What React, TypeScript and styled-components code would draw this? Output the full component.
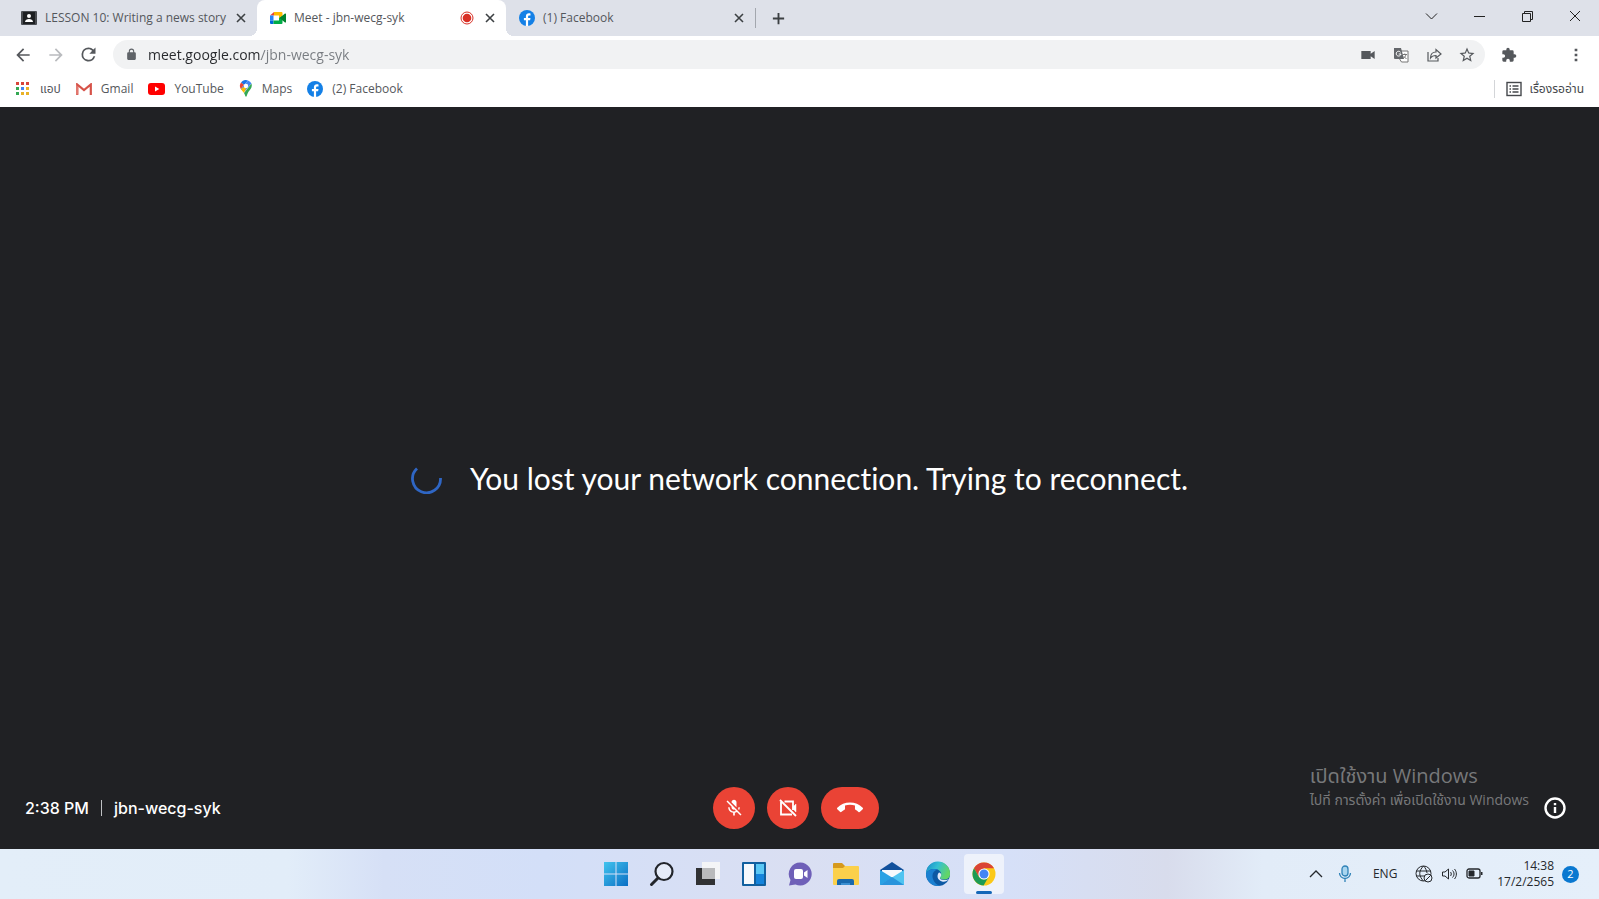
import React from "react";
import styled, { createGlobalStyle } from "styled-components";

const GlobalStyle = createGlobalStyle`
  * { box-sizing: border-box; }
  body { margin: 0; background: #202124; font-family: "Open Sans", "Noto Sans Thai", "Noto Sans", sans-serif; }
  button { font: inherit; color: inherit; border: 0; padding: 0; background: none; cursor: pointer; }
  svg { display: block; flex: none; }
`;

const Desktop = styled.div`
  min-height: 100vh;
  display: flex;
  flex-direction: column;
`;

/* Browser window */

const TabStrip = styled.header`
  display: flex;
  height: 36px;
  background: #dee1e9;
  color: #3c4043;
`;

const Tabs = styled.nav`
  display: flex;
  align-items: center;
  padding-left: 8px;
`;

const Tab = styled.div<{ $active?: boolean }>`
  position: relative;
  display: flex;
  align-items: center;
  gap: 8px;
  width: 249px;
  height: 36px;
  padding: 0 8px 1px 13px;
  background: ${(p) => (p.$active ? "#fff" : "transparent")};
  border-radius: 8px 8px 0 0;

  &::before, &::after {
    content: "";
    display: ${(p) => (p.$active ? "block" : "none")};
    position: absolute;
    bottom: 0;
    width: 8px;
    height: 8px;
  }
  &::before { left: -8px; background: radial-gradient(circle at 0 0, transparent 8px, #fff 8px); }
  &::after { right: -8px; background: radial-gradient(circle at 100% 0, transparent 8px, #fff 8px); }
`;

const TabTitle = styled.button`
  flex: 1;
  min-width: 0;
  white-space: nowrap;
  text-align: left;
  font-size: 12px;
  line-height: 18px;
  color: #54575c;
`;

const TabClose = styled.button`
  display: grid;
  place-items: center;
  width: 16px;
  height: 16px;
`;

const TabDivider = styled.span`
  width: 1px;
  height: 20px;
  background: #a3a7ae;
`;

const NewTab = styled.button`
  display: grid;
  place-items: center;
  width: 28px;
  height: 28px;
  margin-left: 8px;
`;

const WindowControls = styled.div`
  display: flex;
  margin-left: auto;
`;

const WindowButton = styled.button`
  display: grid;
  place-items: center;
  width: 48px;
  height: 32px;
  color: #222;
`;

const Toolbar = styled.div`
  display: flex;
  align-items: center;
  height: 37px;
  padding: 0 7px 0 6px;
  background: #fff;
  color: #5f6368;
`;

const ToolButton = styled.button<{ $muted?: boolean }>`
  display: grid;
  place-items: center;
  width: 33px;
  height: 29px;
  color: ${(p) => (p.$muted ? "#b9bbbe" : "#55585c")};
`;

const AddressBar = styled.div`
  flex: 1;
  display: flex;
  align-items: center;
  height: 29px;
  margin: 0 7px 0 8px;
  padding: 0 2px 0 12px;
  gap: 10px;
  border-radius: 15px;
  background: #f1f2f3;
`;

const AddressInput = styled.input`
  flex: 1;
  min-width: 0;
  border: 0;
  outline: 0;
  padding: 0;
  font-family: "Open Sans", "Noto Sans", sans-serif;
  font-size: 14px;
  line-height: 22px;
  color: transparent;
  background: linear-gradient(90deg, #27292c 113px, #777b80 113px);
  background-clip: text;
`;

const AddressActions = styled.div`
  display: flex;
`;

const MenuButton = styled(ToolButton)`
  margin-left: 34px;
`;

const Bookmarks = styled.nav`
  display: flex;
  align-items: center;
  gap: 15px;
  height: 34px;
  padding: 0 15px 3px;
  background: #fff;
`;

const Bookmark = styled.a`
  display: flex;
  align-items: center;
  gap: 9px;
  font-size: 12px;
  line-height: 18px;
  color: #55585c;
  text-decoration: none;
`;

const ReadingList = styled.button`
  display: flex;
  align-items: center;
  gap: 8px;
  margin-left: auto;
  padding-left: 11px;
  border-left: 1px solid #d3d5d8;
  font-size: 12px;
  line-height: 18px;
  color: #45484c;
`;

/* Meeting */

const Meeting = styled.main`
  position: relative;
  flex: 1;
  display: grid;
  grid-template-rows: 82px 1fr 82px;
  background: #202124;
  color: #fff;
`;

const Status = styled.div`
  grid-row: 2;
  display: flex;
  align-items: center;
  justify-content: center;
  gap: 28px;
`;

const StatusText = styled.h1`
  margin: 0;
  font-family: Lato, sans-serif;
  font-size: 30px;
  line-height: 40px;
  font-weight: 400;
  font-variant-ligatures: none;
`;

const CallBar = styled.footer`
  grid-row: 3;
  display: grid;
  grid-template-columns: 1fr auto 1fr;
  align-items: center;
  padding: 0 33px 0 25px;
`;

const CallInfo = styled.div`
  display: flex;
  align-items: center;
  gap: 12px;
  font-family: Inter, sans-serif;
  font-size: 16px;
  line-height: 24px;
  font-weight: 500;
`;

const CallDivider = styled.span`
  width: 1px;
  height: 16px;
  background: #bfc1c4;
`;

const CallControls = styled.div`
  display: flex;
  gap: 12px;
`;

const CallButton = styled.button<{ $wide?: boolean }>`
  display: grid;
  place-items: center;
  width: ${(p) => (p.$wide ? 58 : 42)}px;
  height: 42px;
  border-radius: 21px;
  background: #ea4335;
  color: #fff;
`;

const InfoButton = styled.button`
  justify-self: end;
  color: #fff;
`;

const Activation = styled.aside`
  position: absolute;
  right: 70px;
  bottom: 39px;
  color: #77787a;
  pointer-events: none;
`;

const ActivationTitle = styled.p`
  margin: 0;
  font-size: 20px;
  line-height: 28px;
`;

const ActivationText = styled.p`
  margin: 0;
  font-size: 14px;
  line-height: 20px;
`;

/* Taskbar */

const Taskbar = styled.footer`
  display: grid;
  grid-template-columns: 1fr auto 1fr;
  align-items: center;
  height: 50px;
  background: linear-gradient(90deg, #e3eef9 0%, #e2edf9 18%, #d6e0f6 24%, #d3dff8 34%, #dadff2 50%, #d6e0f8 63%, #d8dcec 73%, #e2ecf8 79%, #e5effa 100%);
  color: #25282c;
`;

const Apps = styled.nav`
  grid-column: 2;
  display: flex;
  gap: 6px;
`;

const AppButton = styled.button<{ $active?: boolean }>`
  position: relative;
  display: grid;
  place-items: center;
  width: 40px;
  height: 40px;
  border-radius: 4px;
  background: ${(p) => (p.$active ? "#eef2fb" : "transparent")};

  &::after {
    content: "";
    display: ${(p) => (p.$active ? "block" : "none")};
    position: absolute;
    bottom: 0;
    left: 12px;
    width: 16px;
    height: 3px;
    border-radius: 2px;
    background: #1467b8;
  }
`;

const Tray = styled.div`
  display: flex;
  align-items: center;
  justify-content: flex-end;
  padding-right: 20px;
  font-size: 12px;
  line-height: 16px;
`;

const TrayButton = styled.button<{ $width: number }>`
  display: grid;
  place-items: center;
  width: ${(p) => p.$width}px;
  height: 40px;
`;

const Clock = styled.time`
  margin-left: 10px;
  text-align: right;
`;

const Badge = styled.span`
  display: grid;
  place-items: center;
  width: 17px;
  height: 17px;
  margin-left: 8px;
  border-radius: 50%;
  background: #0a78d0;
  color: #fff;
  font-size: 11px;
`;

const FacebookIcon = () => (
  <svg width="16" height="16" viewBox="0 0 16 16">
    <circle cx="8" cy="8" r="8" fill="#1480e6" />
    <path d="M9.1 16v-5.7h2l.4-2.3H9.1V6.6c0-.7.3-1.2 1.3-1.2h1.1v-2c-.4-.1-1-.2-1.6-.2-1.8 0-3 1.1-3 3V8h-2v2.3h2V16z" fill="#fff" />
  </svg>
);

const ClassIcon = () => (
  <svg width="16" height="14" viewBox="0 0 16 14">
    <rect width="16" height="14" rx="1" fill="#4a4d52" />
    <rect x="2" y="1" width="12" height="12" fill="#1d1f22" />
    <circle cx="8" cy="5" r="2" fill="#fff" />
    <path d="M4 11c0-2 2-3 4-3s4 1 4 3z" fill="#fff" />
  </svg>
);

const MeetIcon = () => (
  <svg width="16" height="14" viewBox="0 0 16 14">
    <path d="M0 4.5 4 1v3.5z" fill="#ea4335" />
    <path d="M0 4.5h3.5v5H0z" fill="#2684fc" />
    <path d="M0 9.5h3.5V13H1a1 1 0 0 1-1-1z" fill="#0066da" />
    <path d="M4 1h7.5a1 1 0 0 1 1 1v3L9 7.5v-3H4z" fill="#ffba00" />
    <path d="M3.5 9.5H9V7l3.5-2v7a1 1 0 0 1-1 1h-8z" fill="#00ac47" />
    <path d="M9.5 7 15 2.5c.5-.3 1 0 1 .5v8c0 .5-.5.8-1 .5z" fill="#00832d" />
  </svg>
);

const CloseIcon = () => (
  <svg width="10" height="10" viewBox="0 0 10 10">
    <path d="m1 1 8 8M9 1 1 9" stroke="currentColor" strokeWidth="1.6" />
  </svg>
);

const RecordIcon = () => (
  <svg width="14" height="14" viewBox="0 0 14 14">
    <circle cx="7" cy="7" r="6" fill="none" stroke="#d93025" strokeWidth="1" />
    <circle cx="7" cy="7" r="4.3" fill="#d93025" />
  </svg>
);

const AppsIcon = () => (
  <svg width="16" height="16" viewBox="0 0 16 16">
    {["#d8453a", "#d8453a", "#d8453a", "#34a853", "#4285f4", "#e9b227", "#34a853", "#e9b227", "#e9b227"].map((c, i) => (
      <rect key={i} x={1 + (i % 3) * 5} y={1 + Math.floor(i / 3) * 5} width="3" height="3" fill={c} />
    ))}
  </svg>
);

const GmailIcon = () => (
  <svg width="16" height="12" viewBox="0 0 16 12">
    <path d="M1.2 12V1.5L8 7l6.8-5.5V12" fill="none" stroke="#d65248" strokeWidth="2.2" />
    <path d="M0 2v9.5h2.3v-8z" fill="#e2776e" />
  </svg>
);

const YouTubeIcon = () => (
  <svg width="17" height="12" viewBox="0 0 17 12">
    <rect width="17" height="12" rx="3" fill="#f00" />
    <path d="M7 3.5v5L11.3 6z" fill="#fff" />
  </svg>
);

const MapsIcon = () => (
  <svg width="14" height="17" viewBox="0 0 14 17">
    <path d="M2 2.5A6 6 0 0 1 9 .5L5 5z" fill="#1a73e8" />
    <path d="M2 2.5 5 5 1.8 9A6 6 0 0 1 2 2.5z" fill="#ea4335" />
    <path d="M9 .5a6 6 0 0 1 3.5 3L6 11l-2.5-.5L1.8 9z" fill="#4285f4" />
    <path d="M1.8 9 9 4l-4 9z" fill="#fbbc04" />
    <path d="M12.5 3.5c1 3-.5 5-2 7-1.500 1.800-2.200 3.500-2.900 5.800-.2.5-1 .5-1.200 0C6 15 5.500 14 5 13z" fill="#34a853" />
    <circle cx="7" cy="6" r="2.2" fill="#fff" />
  </svg>
);

const Line = ({ d, size = 16, width = 1.6 }: { d: string; size?: number; width?: number }) => (
  <svg width={size} height={size} viewBox="0 0 16 16" fill="none" stroke="currentColor" strokeWidth={width}>
    <path d={d} />
  </svg>
);

const Solid = ({ d, size = 16 }: { d: string; size?: number }) => (
  <svg width={size} height={size} viewBox="0 0 24 24" fill="currentColor">
    <path d={d} />
  </svg>
);

const TranslateIcon = () => (
  <svg width="16" height="16" viewBox="0 0 16 16">
    <path d="M6 4h9v11H8.5L6 11z" fill="#fff" stroke="#777" />
    <path d="M1 1h7l3 11H2a1 1 0 0 1-1-1z" fill="#64676b" />
    <path d="M7.6 5.3A2.4 2.4 0 1 0 8 7H5.7" fill="none" stroke="#fff" />
    <path d="M9.5 7.5H14M11.8 6.5v1M13 7.5c-.5 2-1.500 3-3 4M11 9.500l2.500 2.500" fill="none" stroke="#777" />
  </svg>
);

const ListIcon = () => (
  <svg width="16" height="16" viewBox="0 0 16 16" fill="none" stroke="currentColor">
    <rect x="1" y="1.5" width="14" height="13" strokeWidth="1.4" />
    <path d="M3.5 5H5m1.5 0h6M3.5 8H5m1.5 0h6M3.5 11H5m1.5 0h6" strokeWidth="1.4" />
  </svg>
);

const StartIcon = () => (
  <svg width="26" height="26" viewBox="0 0 26 26">
    <defs>
      <linearGradient id="start" x1="0" y1="0" x2="1" y2="1">
        <stop offset="0" stopColor="#42c4ee" />
        <stop offset="1" stopColor="#0a6ec4" />
      </linearGradient>
    </defs>
    <path d="M1 1h11.5v11.5H1zM13.5 1H25v11.5H13.5zM1 13.5h11.5V25H1zM13.5 13.5H25V25H13.5z" fill="url(#start)" />
  </svg>
);

const SearchIcon = () => (
  <svg width="26" height="26" viewBox="0 0 26 26" fill="none" stroke="#22252b">
    <circle cx="15" cy="10.5" r="8.5" strokeWidth="2.2" fill="#e6ecf9" />
    <path d="m9 17-6.5 6.5" strokeWidth="3" strokeLinecap="round" />
  </svg>
);

const TaskViewIcon = () => (
  <svg width="26" height="26" viewBox="0 0 26 26">
    <rect x="1" y="7" width="19" height="17" fill="#303133" />
    <rect x="7" y="1" width="18" height="17" fill="#f4f5f7" />
    <rect x="7" y="7" width="13" height="11" fill="#b9babc" />
  </svg>
);

const WidgetsIcon = () => (
  <svg width="26" height="26" viewBox="0 0 26 26">
    <rect x="1" y="1" width="24" height="24" rx="1" fill="#11609f" />
    <rect x="3" y="3" width="10" height="20" fill="#f6f9fc" />
    <rect x="15" y="3" width="8" height="10" fill="#5ac8f5" />
    <rect x="15" y="13" width="8" height="10" fill="#1584dc" />
  </svg>
);

const ChatIcon = () => (
  <svg width="26" height="26" viewBox="0 0 26 26">
    <path d="M13.5 1.5a11.5 11.5 0 1 1-5 22L2 24.5l1.5-5.5a11.5 11.5 0 0 1 10-17.5z" fill="#6f60b8" />
    <rect x="7" y="8" width="9" height="10" rx="2" fill="#fff" />
    <path d="m17 11.5 3.5-2.5v8L17 14.5z" fill="#fff" />
  </svg>
);

const FolderIcon = () => (
  <svg width="28" height="26" viewBox="0 0 28 26">
    <path d="M1 3a1 1 0 0 1 1-1h8l3 3v5H1z" fill="#d6991d" />
    <path d="M1 7h10l2-2h13a1 1 0 0 1 1 1v17a1 1 0 0 1-1 1H2a1 1 0 0 1-1-1z" fill="#fbd04b" />
    <path d="M5 24v-4a2 2 0 0 1 2-2h13a2 2 0 0 1 2 2v4z" fill="#1868ad" />
    <path d="M9 24v-2h9v2z" fill="#3b8fd1" />
  </svg>
);

const MailIcon = () => (
  <svg width="26" height="26" viewBox="0 0 26 26">
    <path d="M1 9 13 1l12 8v3H1z" fill="#12519c" />
    <path d="M3 9h20v10H3z" fill="#f6f9fd" />
    <path d="M1 9v15h24z" fill="#29a1e4" />
    <path d="M25 9v15H1z" fill="#50c4f1" />
    <path d="m1 24 12-8 12 8z" fill="#2994dc" />
  </svg>
);

const EdgeIcon = () => (
  <svg width="26" height="26" viewBox="0 0 26 26">
    <defs>
      <linearGradient id="edgeTop" x1="0" y1="0" x2="1" y2=".4">
        <stop offset="0" stopColor="#1687c8" />
        <stop offset=".5" stopColor="#35bfd3" />
        <stop offset="1" stopColor="#62d567" />
      </linearGradient>
    </defs>
    <circle cx="13" cy="13" r="12" fill="#0c59a4" />
    <path d="M1 13A12 12 0 0 1 25 12c.5 4-2 6.5-5.500 6.5-3 0-4.500-1-4.500-2s1.200-1.300 1.200-3.200C16.200 10 13 8 9.500 8 5.500 8 2 10 1 13z" fill="url(#edgeTop)" />
    <path d="M1 13c1-3 4.500-5 8.500-5 1 0 2 .2 3 .5C8 9.500 6.500 14 8 18c1 3.500 4 6 7 6.800A12 12 0 0 1 1 13z" fill="#1b80d1" />
    <path d="M14 11.500c-2.500 2.500-2 7.500 3 9 2.500.6 5 0 7.500-3-1.500 1-3 1.500-5 1.500-3 0-4.500-1-4.500-2s1.200-1.300 1.200-3.200c0-1-1-2.300-2.200-2.300z" fill="#dfe8f8" />
  </svg>
);

const ChromeIcon = () => (
  <svg width="24" height="24" viewBox="0 0 24 24">
    <circle cx="12" cy="12" r="11.5" fill="#fbc918" />
    <path d="M2 6.3A11.5 11.5 0 0 1 22 6.3H12L7 14.9z" fill="#da4437" />
    <path d="M2 6.3 7 14.9 12 17.5l4.500-2.500-4.900 8.500A11.500 11.500 0 0 1 2 6.300z" fill="#1d9b55" />
    <circle cx="12" cy="12" r="5.6" fill="#fff" />
    <circle cx="12" cy="12" r="4.5" fill="#4285f4" />
  </svg>
);

const MIC_OFF =
  "M19 11h-1.700c0 .74-.16 1.430-.43 2.050l1.230 1.230c.56-.98.900-2.090.900-3.280zm-4.020.17c0-.06.020-.110.020-.170V5c0-1.660-1.340-3-3-3S9 3.340 9 5v.18l5.980 5.990zM4.270 3 3 4.270l6.010 6.010V11c0 1.660 1.330 3 2.990 3 .22 0 .44-.03.650-.08l1.660 1.660c-.71.330-1.500.520-2.310.520-2.760 0-5.300-2.100-5.300-5.100H5c0 3.410 2.720 6.230 6 6.720V21h2v-3.280c.910-.130 1.770-.450 2.540-.900L19.730 21 21 19.730 4.270 3z";
const CALL_END =
  "M12 9c-1.600 0-3.150.25-4.600.72v3.100c0 .39-.23.740-.56.900-.98.490-1.870 1.120-2.660 1.850-.18.180-.43.280-.7.280-.28 0-.53-.110-.71-.29L.29 13.080c-.18-.17-.29-.42-.29-.7 0-.28.110-.53.290-.71C3.340 8.780 7.460 7 12 7s8.660 1.780 11.710 4.670c.18.180.29.430.29.710 0 .28-.110.53-.29.710l-2.480 2.480c-.18.180-.43.290-.71.290-.27 0-.52-.110-.7-.28-.79-.74-1.690-1.360-2.670-1.850-.33-.16-.56-.5-.56-.9v-3.100C15.150 9.250 13.600 9 12 9z";
const PUZZLE =
  "M20.500 11H19V7a2 2 0 0 0-2-2h-4V3.500a2.500 2.500 0 0 0-5 0V5H4a2 2 0 0 0-2 2v3.800h1.500a2.700 2.700 0 0 1 0 5.400H2V20a2 2 0 0 0 2 2h3.800v-1.500a2.700 2.700 0 0 1 5.400 0V22H17a2 2 0 0 0 2-2v-4h1.500a2.500 2.500 0 0 0 0-5z";
const STAR =
  "m22 9.240-7.190-.62L12 2 9.190 8.630 2 9.240l5.460 4.730L5.820 21 12 17.270 18.180 21l-1.630-7.030L22 9.240zM12 15.400l-3.760 2.270 1-4.280-3.320-2.880 4.380-.38L12 6.100l1.710 4.040 4.380.38-3.320 2.880 1 4.280L12 15.400z";
const LOCK =
  "M18 8h-1V6A5 5 0 0 0 7 6v2H6a2 2 0 0 0-2 2v10a2 2 0 0 0 2 2h12a2 2 0 0 0 2-2V10a2 2 0 0 0-2-2zM9 8V6a3 3 0 0 1 6 0v2z";
const ARROW_BACK = "M20 11H7.830l5.590-5.590L12 4l-8 8 8 8 1.410-1.410L7.830 13H20v-2z";
const ARROW_FORWARD = "m12 4-1.410 1.410L16.170 11H4v2h12.170l-5.580 5.590L12 20l8-8-8-8z";
const RELOAD =
  "M17.650 6.350A7.960 7.960 0 0 0 12 4a8 8 0 1 0 7.730 10h-2.080A6 6 0 1 1 12 6c1.660 0 3.140.69 4.220 1.780L13 11h7V4l-2.350 2.350z";

export default function App() {
  return (
    <>
      <GlobalStyle />
      <Desktop>
        <TabStrip>
          <Tabs aria-label="Tabs">
            <Tab>
              <ClassIcon />
              <TabTitle>LESSON 10: Writing a news story</TabTitle>
              <TabClose aria-label="Close tab"><CloseIcon /></TabClose>
            </Tab>
            <Tab $active>
              <MeetIcon />
              <TabTitle>Meet - jbn-wecg-syk</TabTitle>
              <RecordIcon />
              <TabClose aria-label="Close tab"><CloseIcon /></TabClose>
            </Tab>
            <Tab>
              <FacebookIcon />
              <TabTitle>(1) Facebook</TabTitle>
              <TabClose aria-label="Close tab"><CloseIcon /></TabClose>
            </Tab>
            <TabDivider />
            <NewTab aria-label="New tab"><Line d="M8 2v12M2 8h12" size={15} width={2} /></NewTab>
          </Tabs>
          <WindowControls>
            <WindowButton aria-label="Search tabs"><Line d="m3 5.500 5.500 5.500 5.500-5.500" width={1} /></WindowButton>
            <WindowButton aria-label="Minimize"><Line d="M3 8.500h11" width={1} /></WindowButton>
            <WindowButton aria-label="Restore"><Line d="M3.500 5.500h8v8h-8zM5.500 5.500v-2h8v8h-2" width={1} /></WindowButton>
            <WindowButton aria-label="Close window"><Line d="m3 3 10 10M13 3 3 13" width={1} /></WindowButton>
          </WindowControls>
        </TabStrip>

        <Toolbar>
          <ToolButton aria-label="Back"><Solid d={ARROW_BACK} size={20} /></ToolButton>
          <ToolButton aria-label="Forward" $muted><Solid d={ARROW_FORWARD} size={20} /></ToolButton>
          <ToolButton aria-label="Reload"><Solid d={RELOAD} size={21} /></ToolButton>
          <AddressBar>
            <Solid d={LOCK} size={13} />
            <AddressInput aria-label="Address" defaultValue="meet.google.com/jbn-wecg-syk" />
            <AddressActions>
              <ToolButton aria-label="Camera"><Solid d="M2 6h14v4l6-4v12l-6-4v4H2z" /></ToolButton>
              <ToolButton aria-label="Translate"><TranslateIcon /></ToolButton>
              <ToolButton aria-label="Share"><Line d="M2 5v9h10v-3M10 5V2.500L15 7l-5 4V8.500C7 8.500 5.500 9.500 4.500 11c0-3.500 2-6 5.500-6z" width={1.2} /></ToolButton>
              <ToolButton aria-label="Bookmark"><Solid d={STAR} size={18} /></ToolButton>
            </AddressActions>
          </AddressBar>
          <ToolButton aria-label="Extensions"><Solid d={PUZZLE} /></ToolButton>
          <MenuButton aria-label="Menu"><Solid d="M10 2.500h4v4h-4zM10 10h4v4h-4zM10 17.500h4v4h-4z" /></MenuButton>
        </Toolbar>

        <Bookmarks aria-label="Bookmarks">
          <Bookmark href="#apps"><AppsIcon />แอป</Bookmark>
          <Bookmark href="#gmail"><GmailIcon />Gmail</Bookmark>
          <Bookmark href="#youtube"><YouTubeIcon />YouTube</Bookmark>
          <Bookmark href="#maps"><MapsIcon />Maps</Bookmark>
          <Bookmark href="#facebook"><FacebookIcon />(2) Facebook</Bookmark>
          <ReadingList><ListIcon />เรื่องรออ่าน</ReadingList>
        </Bookmarks>

        <Meeting>
          <Status role="status">
            <svg width="31" height="31" viewBox="0 0 31 31" fill="none" stroke="#2f66c4" strokeWidth="2.8">
              <path d="M6 5.500A14 14 0 1 0 29.500 15" />
            </svg>
            <StatusText>You lost your network connection. Trying to reconnect.</StatusText>
          </Status>
          <CallBar>
            <CallInfo>
              <span>2:38 PM</span>
              <CallDivider />
              <span>jbn-wecg-syk</span>
            </CallInfo>
            <CallControls>
              <CallButton aria-label="Turn on microphone"><Solid d={MIC_OFF} size={20} /></CallButton>
              <CallButton aria-label="Turn on camera">
                <svg width="20" height="20" viewBox="0 0 20 20" fill="none" stroke="currentColor" strokeWidth="1.8">
                  <path d="M6.500 3.500H15V12M14 16.500H3V4M2 2l16 16" />
                  <path d="m15 9 3-3v8l-3-3z" fill="currentColor" strokeWidth=".5" />
                </svg>
              </CallButton>
              <CallButton aria-label="Leave call" $wide><Solid d={CALL_END} size={26} /></CallButton>
            </CallControls>
            <InfoButton aria-label="Meeting details">
              <svg width="22" height="22" viewBox="0 0 22 22" fill="none" stroke="currentColor">
                <circle cx="11" cy="11" r="9.5" strokeWidth="2.4" />
                <path d="M11 10v6M11 6v2.200" strokeWidth="2.4" />
              </svg>
            </InfoButton>
          </CallBar>
          <Activation>
            <ActivationTitle>เปิดใช้งาน Windows</ActivationTitle>
            <ActivationText>ไปที่ การตั้งค่า เพื่อเปิดใช้งาน Windows</ActivationText>
          </Activation>
        </Meeting>

        <Taskbar>
          <Apps aria-label="Taskbar apps">
            <AppButton aria-label="Start"><StartIcon /></AppButton>
            <AppButton aria-label="Search"><SearchIcon /></AppButton>
            <AppButton aria-label="Task view"><TaskViewIcon /></AppButton>
            <AppButton aria-label="Widgets"><WidgetsIcon /></AppButton>
            <AppButton aria-label="Chat"><ChatIcon /></AppButton>
            <AppButton aria-label="File Explorer"><FolderIcon /></AppButton>
            <AppButton aria-label="Mail"><MailIcon /></AppButton>
            <AppButton aria-label="Edge"><EdgeIcon /></AppButton>
            <AppButton aria-label="Chrome" $active><ChromeIcon /></AppButton>
          </Apps>
          <Tray>
            <TrayButton $width={30} aria-label="Hidden icons"><Line d="m2 11 6-6 6 6" width={1.3} /></TrayButton>
            <TrayButton $width={28} aria-label="Microphone in use">
              <svg width="14" height="18" viewBox="0 0 14 18" fill="none" stroke="#3083b8" strokeWidth="1.3">
                <rect x="4" y="1" width="6" height="10" rx="3" fill="#a9d5ef" />
                <path d="M1.500 8a5.500 5.500 0 0 0 11 0M7 13.500V17" />
              </svg>
            </TrayButton>
            <TrayButton $width={52} aria-label="Language">ENG</TrayButton>
            <TrayButton $width={26} aria-label="No internet">
              <svg width="18" height="18" viewBox="0 0 18 18" fill="none" stroke="currentColor">
                <circle cx="8.5" cy="8.5" r="7.5" />
                <path d="M1 6h15M1 11h15M8.500 1c-5 5-5 10 0 15M8.500 1c2 2 3 4 3.500 7" />
                <circle cx="13" cy="13" r="4" fill="#e5effa" />
                <path d="m10.200 15.800 5.600-5.600" />
              </svg>
            </TrayButton>
            <TrayButton $width={24} aria-label="Volume"><Line d="M1.500 6v4H4l3.500 3V3L4 6zM9.500 6c1 1 1 3 0 4M11.500 4.500c2 2 2 5 0 7M13.500 3c2.500 3 2.500 7 0 10" width={1} /></TrayButton>
            <TrayButton $width={26} aria-label="Battery">
              <svg width="17" height="12" viewBox="0 0 17 12" fill="none" stroke="currentColor">
                <rect x="1" y="1" width="13" height="9" rx="2" strokeWidth="1.3" />
                <path d="M3 3h5v5H3z" fill="currentColor" />
                <path d="M15.700 4v3" strokeWidth="1.6" />
              </svg>
            </TrayButton>
            <Clock>14:38<br />17/2/2565</Clock>
            <Badge>2</Badge>
          </Tray>
        </Taskbar>
      </Desktop>
    </>
  );
}
